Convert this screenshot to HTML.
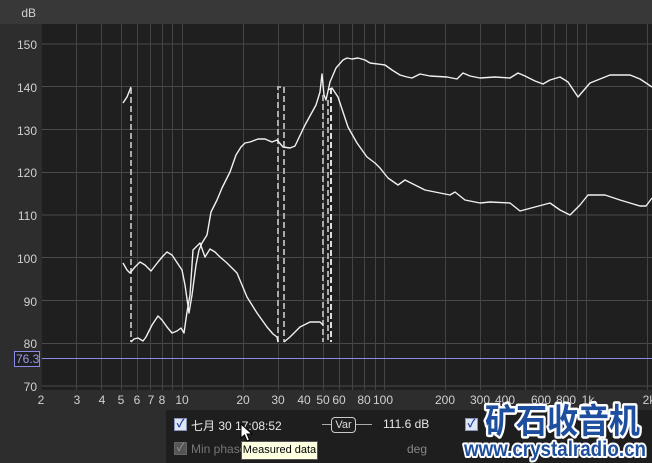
<!DOCTYPE html>
<html><head><meta charset="utf-8"><style>
html,body{margin:0;padding:0;width:652px;height:463px;overflow:hidden;background:#2d2d2d;font-family:"Liberation Sans","Noto Sans CJK SC",sans-serif;}
.abs{position:absolute;white-space:nowrap;}
</style></head><body>
<div class="abs" style="left:0;top:0;width:652px;height:24px;background:#383838"></div>
<svg class="abs" style="left:0;top:0" width="652" height="463">
<rect x="42" y="24" width="610" height="366" fill="#1f1f1f"/>
<g stroke="#4a4a4a" stroke-width="1">
<line x1="42" x2="652" y1="44" y2="44"/><line x1="42" x2="652" y1="86.5" y2="86.5"/><line x1="42" x2="652" y1="129.5" y2="129.5"/><line x1="42" x2="652" y1="172.5" y2="172.5"/><line x1="42" x2="652" y1="215" y2="215"/><line x1="42" x2="652" y1="257.5" y2="257.5"/><line x1="42" x2="652" y1="300.5" y2="300.5"/><line x1="42" x2="652" y1="343.5" y2="343.5"/><line x1="42" x2="652" y1="386" y2="386"/>
</g>
<g stroke="#444" stroke-width="1">
<line x1="76.5" x2="76.5" y1="24" y2="390"/><line x1="101.5" x2="101.5" y1="24" y2="390"/><line x1="121.5" x2="121.5" y1="24" y2="390"/><line x1="137.5" x2="137.5" y1="24" y2="390"/><line x1="150.5" x2="150.5" y1="24" y2="390"/><line x1="162.5" x2="162.5" y1="24" y2="390"/><line x1="172.5" x2="172.5" y1="24" y2="390"/><line x1="182.5" x2="182.5" y1="24" y2="390"/>
<line x1="243.5" x2="243.5" y1="24" y2="390"/><line x1="278.5" x2="278.5" y1="24" y2="390"/><line x1="303.5" x2="303.5" y1="24" y2="390"/><line x1="323.5" x2="323.5" y1="24" y2="390"/><line x1="339.5" x2="339.5" y1="24" y2="390"/><line x1="352.5" x2="352.5" y1="24" y2="390"/><line x1="364.5" x2="364.5" y1="24" y2="390"/><line x1="375.5" x2="375.5" y1="24" y2="390"/><line x1="384.5" x2="384.5" y1="24" y2="390"/>
<line x1="445.5" x2="445.5" y1="24" y2="390"/><line x1="480.5" x2="480.5" y1="24" y2="390"/><line x1="505.5" x2="505.5" y1="24" y2="390"/><line x1="525.5" x2="525.5" y1="24" y2="390"/><line x1="541.5" x2="541.5" y1="24" y2="390"/><line x1="554.5" x2="554.5" y1="24" y2="390"/><line x1="566.5" x2="566.5" y1="24" y2="390"/><line x1="577.5" x2="577.5" y1="24" y2="390"/><line x1="586.5" x2="586.5" y1="24" y2="390"/><line x1="647.5" x2="647.5" y1="24" y2="390"/>
</g>
<line x1="42" x2="652" y1="358.5" y2="358.5" stroke="#8a8ae8" stroke-width="1"/>
<g stroke="#aaa" stroke-width="2" stroke-dasharray="6,3" fill="none">
<line x1="131" x2="131" y1="88" y2="342"/>
<path d="M278 342 V87 H284 V342"/>
<line x1="323" x2="323" y1="95" y2="342"/>
<line x1="328" x2="328" y1="100" y2="342"/>
<line x1="331" x2="331" y1="88" y2="342" stroke="#ddd"/>
</g>
<g stroke="#f0f0f0" stroke-width="1.4" fill="none" stroke-linejoin="round">
<path d="M123 103 L127 97 L131 87"/>
<path d="M123 263 L127 270 L130 273 L135 267 L140 262 L145 265 L151 271 L158 262 L163 256 L167 252 L172 255 L178 264 L182 270 L185 285 L189 313 L192 295 L196 265 L199 250 L202 243 L207 235 L211 212 L217 200 L222 188 L230 172 L236 155 L241 147 L245 143 L250 142 L258 139 L265 139 L272 142 L277 140 L283 147 L290 148 L295 146 L305 125 L316 105 L320 92 L322 74 L324 95 L326 100 L330 82 L336 68 L343 60 L347 58 L352 59 L358 58 L365 60 L370 63 L385 65 L392 70 L400 75 L407 77 L412 78 L420 74 L430 76 L447 77 L457 79 L463 73 L470 76 L480 78 L495 77 L510 78 L518 73 L525 76 L535 81 L543 84 L550 80 L560 77 L568 82 L578 97 L584 90 L590 83 L600 79 L610 75 L630 75 L640 79 L652 87"/>
<path d="M131 342 L134 339 L138 338 L143 341 L146 337 L152 325 L158 316 L162 320 L167 327 L172 333 L177 331 L181 328 L184 333 L187 312 L190 295 L193 250 L200 243 L205 257 L210 249 L215 252 L220 257 L227 263 L237 273 L247 297 L257 313 L267 327 L273 334 L277 337 L278 342"/>
<path d="M284 342 L290 337 L300 327 L310 322 L320 322 L323 325"/>
<path d="M328 90 L332 88 L338 97 L348 127 L357 143 L367 157 L375 163 L380 168 L388 178 L398 185 L405 180 L413 184 L425 190 L440 193 L450 195 L455 192 L465 200 L480 203 L490 202 L510 203 L520 211 L535 207 L550 203 L560 210 L570 215 L580 205 L588 195 L605 195 L620 200 L640 206 L646 206 L652 198"/>
</g>
<g fill="#d0d0d0" font-size="12" font-family="Liberation Sans, sans-serif" text-anchor="end">
<text x="36" y="17">dB</text>
<text x="37" y="49">150</text><text x="37" y="92">140</text><text x="37" y="135">130</text><text x="37" y="177">120</text><text x="37" y="220">110</text><text x="37" y="263">100</text><text x="37" y="306">90</text><text x="37" y="348">80</text><text x="37" y="391">70</text>
</g>
<rect x="14.5" y="351.5" width="25" height="15" fill="#1f1f1f" stroke="#8a8ae8"/>
<text x="16" y="363" fill="#9a9af0" font-size="12" font-family="Liberation Sans, sans-serif">76.3</text>
<g fill="#d0d0d0" font-size="12" font-family="Liberation Sans, sans-serif" text-anchor="middle">
<text x="41" y="404">2</text><text x="77" y="404">3</text><text x="102" y="404">4</text><text x="121" y="404">5</text><text x="137" y="404">6</text><text x="151" y="404">7</text><text x="162" y="404">8</text><text x="182" y="404">10</text><text x="243" y="404">20</text><text x="278" y="404">30</text><text x="304" y="404">40</text><text x="323" y="404">50</text><text x="339" y="404">60</text><text x="364" y="404">80</text><text x="383" y="404">100</text><text x="445" y="404">200</text><text x="480" y="404">300</text><text x="505" y="404">400</text><text x="541" y="404">600</text><text x="566" y="404">800</text><text x="588" y="404">1k</text><text x="649" y="404">2k</text>
</g>
<rect x="166" y="410" width="486" height="53" fill="#1e1e1e"/>
</svg>
<div class="abs" style="left:174px;top:418px;width:11px;height:11px;background:#dfe6f5;border:1px solid #8a96b8;color:#1a3fa0;font-size:11px;line-height:11px;text-align:center;font-weight:bold">✓</div>
<div class="abs" style="left:191px;top:417px;color:#e8e8e8;font-size:12px">七月 30 17:08:52</div>
<div class="abs" style="left:322px;top:424px;width:50px;height:1px;background:#aaa"></div>
<div class="abs" style="left:331px;top:417px;width:23px;height:14px;border:1px solid #ccc;border-radius:4px;background:#1e1e1e;color:#ddd;font-size:11px;line-height:14px;text-align:center">Var</div>
<div class="abs" style="left:383px;top:417px;color:#e8e8e8;font-size:12px">111.6 dB</div>
<div class="abs" style="left:465px;top:418px;width:11px;height:11px;background:#dfe6f5;border:1px solid #8a96b8;color:#1a3fa0;font-size:11px;line-height:11px;text-align:center;font-weight:bold">✓</div>
<div class="abs" style="left:174px;top:442px;width:11px;height:11px;background:#555;border:1px solid #666;color:#999;font-size:11px;line-height:11px;text-align:center">✓</div>
<div class="abs" style="left:191px;top:442px;color:#777;font-size:12px">Min phase</div>
<div class="abs" style="left:407px;top:442px;color:#888;font-size:12px">deg</div>
<div class="abs" style="left:465px;top:442px;width:11px;height:11px;background:#555;border:1px solid #666;color:#999;font-size:11px;line-height:11px;text-align:center">✓</div>
<div class="abs" style="left:241px;top:441px;width:77px;height:19px;background:#ffffe1;border:1px solid #555;color:#000;font-size:11px;line-height:17px;text-align:center;box-sizing:border-box">Measured data</div>
<svg class="abs" style="left:240px;top:423px" width="14" height="20"><path d="M1 1 L1 15 L4.5 12 L7 18 L9.5 17 L7 11 L12 11 Z" fill="#fff" stroke="#000" stroke-width="1"/></svg>
<svg class="abs" style="left:455px;top:390px" width="197" height="73">
<text x="30" y="43" textLength="155" lengthAdjust="spacingAndGlyphs" font-size="34" font-weight="bold" font-family="Noto Sans CJK SC, sans-serif" fill="#1d4f9e" stroke="#fff" stroke-width="5" paint-order="stroke fill" stroke-linejoin="round">矿石收音机</text>
<text x="9" y="66" textLength="182" lengthAdjust="spacingAndGlyphs" font-size="21" font-weight="bold" font-family="Liberation Sans, sans-serif" fill="#1d4f9e" stroke="#fff" stroke-width="4" paint-order="stroke fill" stroke-linejoin="round">www.crystalradio.cn</text>
</svg>
</body></html>
